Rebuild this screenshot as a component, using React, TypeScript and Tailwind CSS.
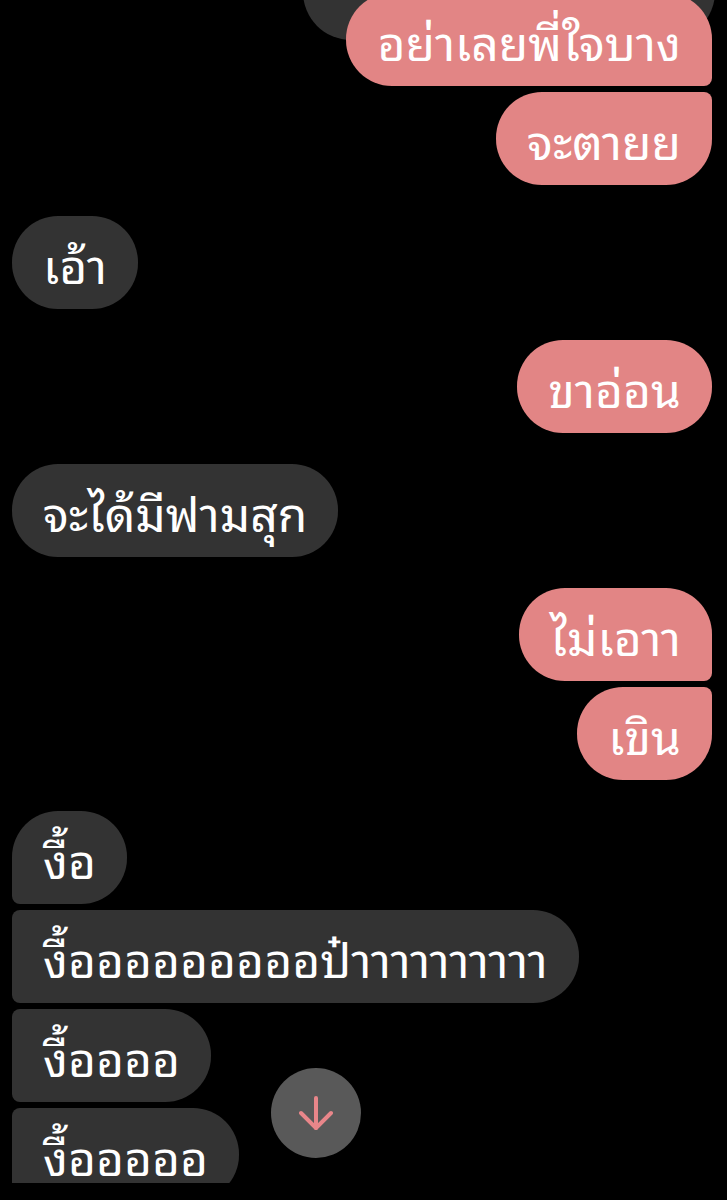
import React from "react";

type Msg = { text: string; side: "l" | "r"; cls: string; gapTop: string };

const msgs: Msg[] = [
  { text: "อย่าเลยพี่ใจบาง", side: "r", cls: "rounded-l-[46px] rounded-tr-[46px] rounded-br-[8px]", gapTop: "" },
  { text: "จะตายย", side: "r", cls: "rounded-l-[46px] rounded-tr-[8px] rounded-br-[46px]", gapTop: "mt-[6px]" },
  { text: "เอ้า", side: "l", cls: "rounded-[46px]", gapTop: "mt-[31px]" },
  { text: "ขาอ่อน", side: "r", cls: "rounded-[46px]", gapTop: "mt-[31px]" },
  { text: "จะได้มีฟามสุก", side: "l", cls: "rounded-[46px]", gapTop: "mt-[31px]" },
  { text: "ไม่เอาา", side: "r", cls: "rounded-l-[46px] rounded-tr-[46px] rounded-br-[8px]", gapTop: "mt-[31px]" },
  { text: "เขิน", side: "r", cls: "rounded-l-[46px] rounded-tr-[8px] rounded-br-[46px]", gapTop: "mt-[6px]" },
  { text: "งื้อ", side: "l", cls: "rounded-r-[46px] rounded-tl-[46px] rounded-bl-[8px]", gapTop: "mt-[31px]" },
  { text: "งื้อออออออออป๋าาาาาาาาาา", side: "l", cls: "rounded-r-[46px] rounded-l-[8px]", gapTop: "mt-[6px]" },
  { text: "งื้ออออ", side: "l", cls: "rounded-r-[46px] rounded-l-[8px]", gapTop: "mt-[6px]" },
  { text: "งื้อออออ", side: "l", cls: "rounded-r-[46px] rounded-l-[8px]", gapTop: "mt-[6px]" },
];

export default function App() {
  return (
    <div
      className="relative w-[727px] h-[1200px] overflow-hidden bg-black"
      style={{ fontFamily: '"Noto Sans Thai Looped", "Noto Sans Thai", "Noto Sans", sans-serif' }}
    >
      <div className="absolute left-[303px] top-[-60px] w-[412px] h-[100px] rounded-[48px] bg-[#333333]" />
      <div className="relative flex flex-col pl-[12px] pr-[15px] mt-[-7px]">
        {msgs.map((m, i) => (
          <div key={i} className={`flex ${m.side === "r" ? "justify-end" : "justify-start"} ${m.gapTop}`}>
            <div
              className={`h-[93px] flex items-center px-[31px] text-[48px] font-normal leading-none text-white whitespace-nowrap ${
                m.side === "r" ? "bg-[#e28585]" : "bg-[#333333]"
              } ${m.cls}`}
            >
              {m.text}
            </div>
          </div>
        ))}
      </div>
      <div className="absolute left-0 right-0 top-[1183px] h-[17px] bg-black" />
      <div className="absolute left-[271px] top-[1068px] w-[90px] h-[90px] rounded-full bg-[#595959] flex items-center justify-center">
        <svg width="34" height="34" viewBox="0 0 34 34" fill="none" stroke="#e8868a" strokeWidth="4" strokeLinecap="round" strokeLinejoin="round">
          <path d="M17 2v30" />
          <path d="M2 17l15 15 15-15" />
        </svg>
      </div>
    </div>
  );
}
